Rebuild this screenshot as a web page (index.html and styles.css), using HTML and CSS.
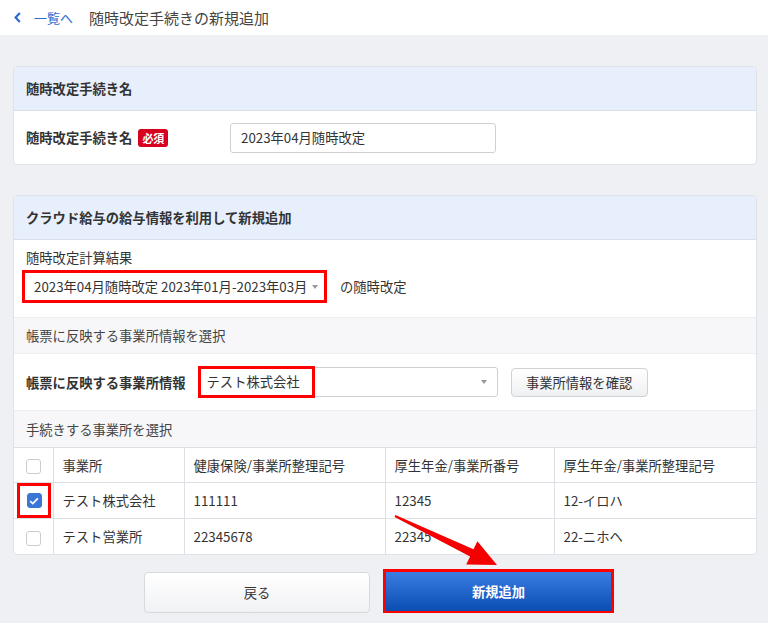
FILE: index.html
```html
<!DOCTYPE html>
<html lang="ja">
<head>
    <meta charset="UTF-8">
    <meta name="viewport" content="width=device-width, initial-scale=1.0">
    <title>随時改定手続きの新規追加</title>
    <link rel="stylesheet" href="styles.css">
</head>
<body>
    <header class="topbar">
        <a class="back" href="#">
            <svg class="chevron" width="7" height="11" viewBox="0 0 7 11"><path d="M5.8 1 1.6 5.5l4.2 4.5" fill="none" stroke="currentColor" stroke-width="2.2"/></svg>
            一覧へ
        </a>
        <h1>随時改定手続きの新規追加</h1>
    </header>

    <main class="page">
        <section class="card">
            <div class="card-head">随時改定手続き名</div>
            <div class="name-row">
                <div class="name-label">随時改定手続き名 <span class="badge">必須</span></div>
                <div class="text-input">2023年04月随時改定</div>
            </div>
        </section>

        <section class="card">
            <div class="card-head">クラウド給与の給与情報を利用して新規追加</div>
            <div class="calc">
                <div class="calc-label">随時改定計算結果</div>
                <div class="calc-line">
                    <div class="select select-hl">
                        <span>2023年04月随時改定 2023年01月-2023年03月</span>
                        <i class="caret"></i>
                    </div>
                    <span class="suffix">の随時改定</span>
                </div>
            </div>

            <div class="subhead">帳票に反映する事業所情報を選択</div>
            <div class="office-row">
                <div class="office-label">帳票に反映する事業所情報</div>
                <div class="select office-select">
                    <span class="hl-box">テスト株式会社</span>
                    <i class="caret"></i>
                </div>
                <button class="btn-light">事業所情報を確認</button>
            </div>

            <div class="subhead subhead-tall">手続きする事業所を選択</div>
            <table class="offices">
                <thead>
                    <tr>
                        <th class="col-check"><span class="checkbox"></span></th>
                        <th class="col-name">事業所</th>
                        <th class="col-kenpo">健康保険/事業所整理記号</th>
                        <th class="col-nenkin">厚生年金/事業所番号</th>
                        <th>厚生年金/事業所整理記号</th>
                    </tr>
                </thead>
                <tbody>
                    <tr>
                        <td class="col-check">
                            <div class="check-hl">
                                <span class="checkbox checked">
                                    <svg width="10" height="8" viewBox="0 0 10 8"><path d="M1.2 4.2 3.8 6.6 8.8 1.4" fill="none" stroke="#fff" stroke-width="1.8"/></svg>
                                </span>
                            </div>
                        </td>
                        <td>テスト株式会社</td>
                        <td>111111</td>
                        <td>12345</td>
                        <td>12-イロハ</td>
                    </tr>
                    <tr>
                        <td class="col-check"><span class="checkbox"></span></td>
                        <td>テスト営業所</td>
                        <td>22345678</td>
                        <td>22345</td>
                        <td>22-ニホヘ</td>
                    </tr>
                </tbody>
            </table>
        </section>

        <div class="actions">
            <button class="btn-back">戻る</button>
            <button class="btn-primary">新規追加</button>
        </div>
    </main>

    <!-- annotation arrow -->
    <svg class="arrow" width="768" height="623" viewBox="0 0 768 623">
        <polygon points="395.4,515.1 473.5,549.3 477.4,541.2 497,565 466.2,564.6 470.1,556.5 394.6,516.9" fill="#f40000"/>
    </svg>
</body>
</html>
```

FILE: styles.css
```css
body {
    margin: 0;
    background: #eff0f4;
    font-family: "Noto Sans CJK JP", "Noto Sans", sans-serif;
    font-size: 13.3px;
    color: #333;
    position: relative;
}

.topbar {
    height: 35px;
    background: #fff;
    display: flex;
    align-items: center;
    padding-left: 14px;
}

.back {
    display: flex;
    align-items: center;
    color: #2c6bd0;
    text-decoration: none;
    font-size: 13px;
}

.chevron {
    margin-right: 13px;
}

.topbar h1 {
    margin: 0 0 0 16px;
    font-size: 15px;
    font-weight: normal;
    color: #444;
}

.page {
    padding: 31px 11px 0 13px;
}

.card {
    background: #fff;
    border: 1px solid #dfe2e7;
    border-radius: 4px;
    margin-bottom: 30px;
    overflow: hidden;
}

.card-head {
    height: 43px;
    background: #e6effb;
    border-bottom: 1px solid #d8e0ea;
    display: flex;
    align-items: center;
    padding-left: 12px;
    font-weight: bold;
}

.name-row {
    height: 53px;
    display: flex;
    align-items: center;
    padding-left: 12px;
}

.name-label {
    width: 204px;
    font-weight: bold;
    display: flex;
    align-items: center;
}

.badge {
    margin-left: 6px;
    background: #d7001f;
    color: #fff;
    font-size: 11px;
    font-weight: bold;
    border-radius: 3px;
    padding: 0 4px;
    height: 18px;
    line-height: 18px;
}

.text-input {
    width: 244px;
    height: 28px;
    border: 1px solid #cdd1d6;
    border-radius: 3px;
    padding: 0 10px;
    line-height: 28px;
}

.calc {
    padding: 9px 12px 14px;
}

.calc-label {
    line-height: 18px;
    margin-bottom: 3px;
}

.calc-line {
    display: flex;
    align-items: center;
}

.select {
    display: flex;
    align-items: center;
    position: relative;
    background: #fff;
    border: 1px solid #cdd1d6;
    border-radius: 3px;
    box-sizing: border-box;
}

.select-hl {
    width: 305px;
    height: 33px;
    margin-left: -4px;
    border: 3px solid #f00;
    border-radius: 0;
    padding-left: 9px;
}

.caret {
    position: absolute;
    right: 10px;
    top: 50%;
    margin-top: -2px;
    border-left: 3px solid transparent;
    border-right: 3px solid transparent;
    border-top: 4px solid #999;
}

.select-hl .caret {
    right: 6px;
}

.suffix {
    margin-left: 13px;
}

.subhead {
    height: 35px;
    background: #f7f7f9;
    border-top: 1px solid #eceef1;
    display: flex;
    align-items: center;
    padding-left: 12px;
    color: #444;
}

.subhead-tall {
    height: 36px;
}

.office-row {
    height: 56px;
    border-top: 1px solid #eceef1;
    display: flex;
    align-items: center;
    padding-left: 12px;
}

.office-label {
    font-weight: bold;
    margin-right: 12px;
}

.office-select {
    width: 300px;
    height: 30px;
}

.hl-box {
    width: 117px;
    height: 32px;
    margin: -1px 0 0 -1px;
    box-sizing: border-box;
    border: 3px solid #f00;
    padding-left: 6px;
    display: flex;
    align-items: center;
}

.btn-light {
    margin-left: 13px;
    width: 137px;
    height: 29px;
    border: 1px solid #cfd3d8;
    border-radius: 4px;
    background: linear-gradient(#fff, #eff0f2);
    font-family: inherit;
    font-size: 13.3px;
    color: #333;
}

.offices {
    width: 100%;
    border-collapse: collapse;
}

.offices th,
.offices td {
    height: 35px;
    padding: 0 9px;
    text-align: left;
    font-weight: normal;
    border-top: 1px solid #dcdfe3;
    border-left: 1px solid #dcdfe3;
}

.offices th:first-child,
.offices td:first-child {
    border-left: none;
}

.offices thead th {
    height: 34px;
}

.col-check {
    width: 39px;
    box-sizing: border-box;
    text-align: center;
}

.offices .col-check {
    padding: 0;
    text-align: center;
}

.col-name {
    width: 112px;
}

.col-kenpo {
    width: 182px;
}

.col-nenkin {
    width: 150px;
}

.checkbox {
    display: inline-flex;
    align-items: center;
    justify-content: center;
    width: 15px;
    height: 15px;
    border: 1px solid #c9cdd3;
    border-radius: 3px;
    background: #fff;
    vertical-align: middle;
    box-sizing: border-box;
}

.checkbox.checked {
    background: #3a76d6;
    border-color: #3a76d6;
}

.check-hl {
    width: 34px;
    height: 35px;
    margin: 0 0 0 3px;
    box-sizing: border-box;
    border: 3px solid #f00;
    display: flex;
    align-items: center;
    justify-content: center;
}

.actions {
    display: flex;
    justify-content: center;
    align-items: flex-start;
    gap: 16px;
    margin-top: -13px;
    padding-right: 15px;
}

.btn-back {
    width: 226px;
    height: 41px;
    border: 1px solid #d6d9de;
    border-radius: 4px;
    background: linear-gradient(#fff, #f1f2f4);
    font-family: inherit;
    font-size: 13.3px;
    color: #333;
}

.btn-primary {
    width: 225px;
    height: 39px;
    border: none;
    background: linear-gradient(#3b7de2, #0a4db3);
    outline: 3px solid #f00;
    color: #fff;
    font-family: inherit;
    font-size: 13.3px;
    font-weight: bold;
}

.arrow {
    position: absolute;
    left: 0;
    top: 0;
    pointer-events: none;
}
```
